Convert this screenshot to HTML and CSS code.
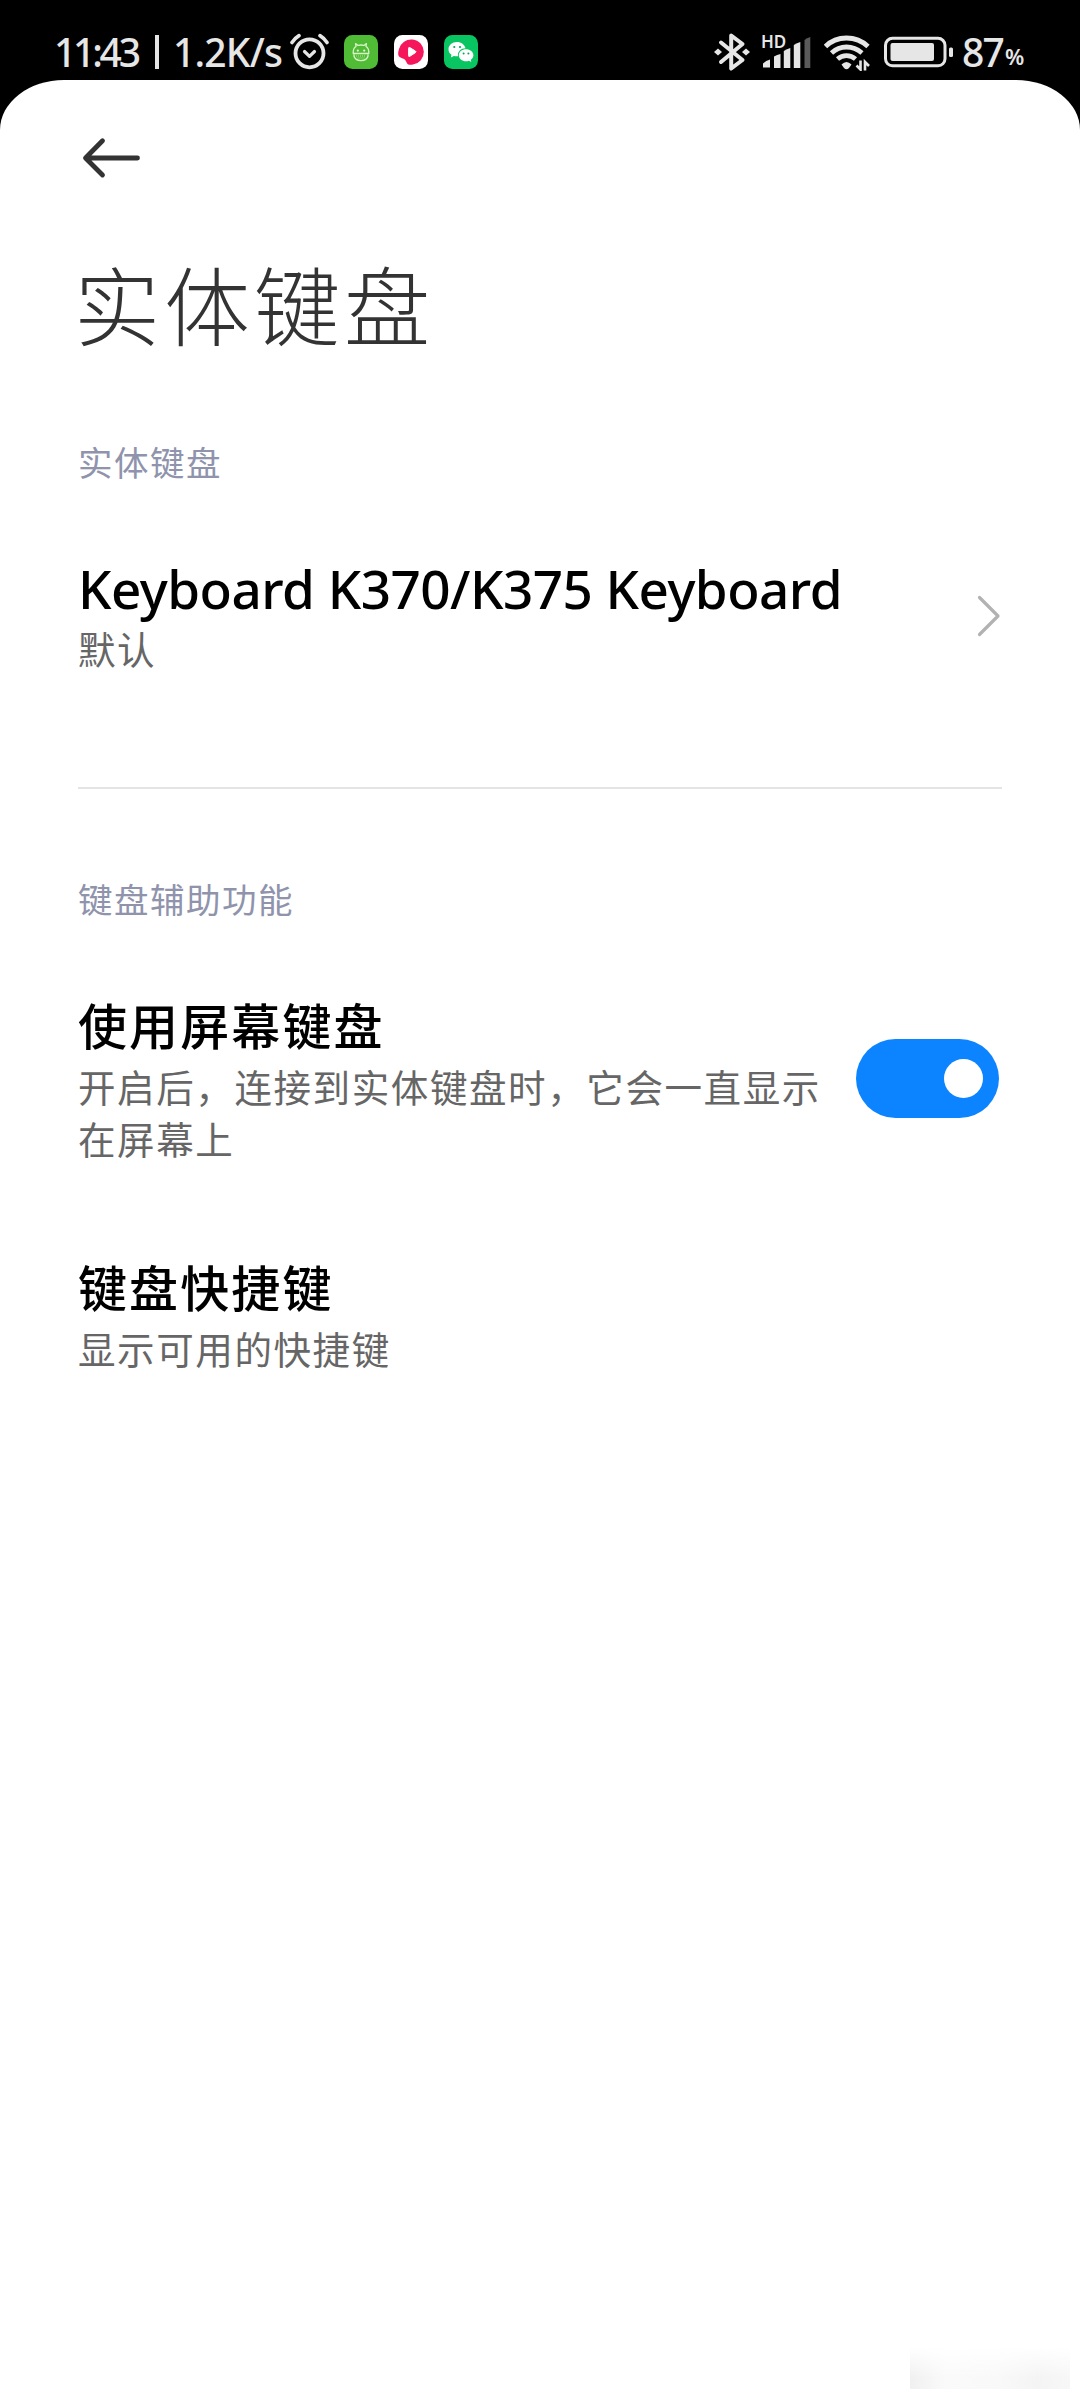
FILE: index.html
```html
<!DOCTYPE html>
<html lang="zh-CN">
<head>
<meta charset="utf-8">
<title>实体键盘</title>
<link rel="stylesheet" href="styles.css">
</head>
<body>
<div class="status">
  <div class="status-left">
    <span class="clock">11:43</span><span class="bar"></span><span class="speed">1.2K/s</span>
    <svg class="alarm" width="40" height="38" viewBox="0 0 40 38" fill="none" stroke="#e6e6e6" stroke-linecap="round">
      <circle cx="19.5" cy="20.3" r="14" stroke-width="3.8"/>
      <path d="M14.5 18.5l5 4.8 5-4.8" stroke-width="3.2" stroke-linejoin="round"/>
      <path d="M2 9.5Q5 5 9 2.6M37 9.5Q34 5 30 2.6" stroke-width="3.6"/>
    </svg>
    <svg class="app" width="34" height="34" viewBox="0 0 34 34">
      <rect width="34" height="34" rx="8.5" fill="#50bb35"/>
      <path d="M9.2 18.5Q9 13 12 11.5L11.6 8.6 14 10.4Q17 9.6 20 10.4L22.4 8.6 22 11.5Q25 13 24.8 18.5ZM10 19.5V21Q11 25.6 17 25.6T24 21V19.5" fill="none" stroke="#d9f3c9" stroke-width="1.3" stroke-linejoin="round"/>
      <path d="M12 21h10M13.5 23h7" stroke="#b6e2a4" stroke-width="1" stroke-dasharray="1 1"/>
      <circle cx="13.8" cy="15.6" r="1.1" fill="#e6f9dc"/><circle cx="20.2" cy="15.6" r="1.1" fill="#e6f9dc"/>
    </svg>
    <svg class="app" width="34" height="34" viewBox="0 0 34 34">
      <rect width="34" height="34" rx="8.5" fill="#fff"/>
      <path d="M5 14A12.6 12.6 0 1 1 19 29.5C16 30 14 29.8 13 28.2 12 26.5 12 25.6 10.5 24.2 8.5 23 4.2 22.5 4.2 19.2Q4.2 16.5 5 14Z" fill="#f5165b"/>
      <path d="M14.6 13.2Q14.6 12 15.8 12.6L21.4 16Q22.6 16.8 21.4 17.7L15.8 21.3Q14.6 22 14.6 20.8Z" fill="#fff" stroke="#fff" stroke-width="1"/>
    </svg>
    <svg class="app" width="34" height="34" viewBox="0 0 34 34">
      <rect width="34" height="34" rx="8.5" fill="#09c561"/>
      <path d="M13 7C8.200 7 4.500 10.200 4.500 14.200 4.500 16.500 5.600 18.500 7.500 19.800L6.800 22.500 9.900 20.900Q12 21.500 14 21.300C13.300 16.800 17 13.300 21.500 13.300 20.600 9.600 17.200 7 13 7Z" fill="#fff"/>
      <path d="M22 14.200C18 14.200 14.800 16.800 14.800 20.200S18 26.200 22 26.200Q23.500 26.200 24.900 25.700L27.300 27 26.700 24.800C28.400 23.700 29.400 22 29.400 20.200 29.400 16.800 26 14.200 22 14.200Z" fill="#fff"/>
      <g fill="#09a553"><circle cx="10.300" cy="12" r="1.100"/><circle cx="16" cy="12" r="1.100"/><circle cx="19.600" cy="18.500" r="1"/><circle cx="24.400" cy="18.500" r="1"/></g>
    </svg>
  </div>
  <div class="status-right">
    <svg width="36" height="40" viewBox="0 0 36 40">
      <path d="M7 10.500L28.500 28 17.200 36.500V3.500L28.500 12 7 30" fill="none" stroke="#e6e6e6" stroke-width="4" stroke-linejoin="round" stroke-linecap="round"/>
      <path d="M0 20l4-3.600 4 3.600-4 3.600zM28 20l4-3.600 4 3.600-4 3.600z" fill="#e6e6e6"/>
    </svg>
    <div class="signal">
      <span class="hd">HD</span>
      <svg width="50" height="36" viewBox="0 0 50 36" fill="#e6e6e6">
        <path d="M2 33.500V29.500Q5 26.500 9 25.500V33.500Z"/><path d="M13 34V22.500Q16 20.800 19.500 20V34Z"/><path d="M22.800 34V17Q26 14.800 29.300 14V34Z"/><path d="M32.800 34V11Q36 9 39.300 8V34Z"/><path d="M43.500 34V6Q46 4 49.300 3V34Z" fill="#5a5a5a"/>
      </svg>
    </div>
    <svg class="wifi" width="46" height="38" viewBox="0 0 46 38">
      <g fill="none" stroke="#e6e6e6" stroke-width="4.800"><path d="M1.500 13.500Q10 5 22.500 5T44 13.500"/><path d="M7.500 20Q14 14 22.500 14T38 20"/><path d="M13.500 26Q17.500 22.600 22.500 22.600T31.500 26"/></g>
      <path d="M17.500 31.500Q22.500 26.500 27.500 31.500L25 35Q22.500 37.500 20 35Z" fill="#e6e6e6"/>
      <path d="M36.500 27.500V36.500L32.500 32.500M41 37.500V29L45 33" fill="none" stroke="#e6e6e6" stroke-width="2.600"/>
    </svg>
    <svg class="battery" width="70" height="32" viewBox="0 0 70 32">
      <rect x="1.500" y="2.300" width="59.500" height="27.500" rx="7" fill="none" stroke="#e6e6e6" stroke-width="3"/>
      <rect x="6.500" y="7" width="43.500" height="18" rx="2" fill="#e6e6e6"/>
      <rect x="65" y="11.500" width="4" height="9.500" rx="1.500" fill="#e6e6e6"/>
    </svg>
    <span class="level">87</span><span class="percent">%</span>
  </div>
</div>
<main class="sheet">
  <div class="back">
    <svg width="64" height="44" viewBox="0 0 64 44" fill="none" stroke="#333" stroke-linecap="round" stroke-linejoin="round"><path d="M24.500 4.700L7.500 22l17 17M8 22H59.500" stroke-width="4.800"/></svg>
  </div>
  <h1 class="title">实体键盘</h1>
  <section class="group first">
    <h2 class="label">实体键盘</h2>
    <div class="row device">
      <div class="text"><div class="name latin">Keyboard K370/K375 Keyboard</div><div class="summary">默认</div></div>
      <svg class="chevron" width="24" height="44" viewBox="0 0 24 44"><path d="M2.500 3.500L21 22 2.500 40.500" fill="none" stroke="#b2b2b2" stroke-width="3.200" stroke-linejoin="round" stroke-linecap="round"/></svg>
    </div>
  </section>
  <section class="group second">
    <h2 class="label">键盘辅助功能</h2>
    <div class="row">
      <div class="text"><div class="name">使用屏幕键盘</div><div class="summary">开启后，连接到实体键盘时，它会一直显示在屏幕上</div></div>
      <div class="toggle"><div class="knob"></div></div>
    </div>
    <div class="row shortcuts">
      <div class="text"><div class="name">键盘快捷键</div><div class="summary">显示可用的快捷键</div></div>
    </div>
  </section>
  <div class="smudge"></div>
</main>
</body>
</html>
```
FILE: styles.css
```css
* { box-sizing: border-box; }
body { margin: 0; background: #000; font-family: "Noto Sans CJK SC", "Noto Sans", sans-serif; }
svg { display: block; flex: none; }
.status { display: flex; justify-content: space-between; height: 80px; padding: 24px 56px 0 54px; color: #e6e6e6; font-family: "Noto Sans", sans-serif; font-weight: 500; }
.status-left, .status-right { display: flex; align-items: center; height: 56px; }
.clock, .speed { font-size: 39px; line-height: 56px; white-space: nowrap; }
.clock { width: 101px; letter-spacing: -3.200px; }
.bar { width: 4px; height: 34px; margin-right: 14px; background: #e6e6e6; }
.speed { width: 117px; letter-spacing: -0.800px; }
.alarm { margin-right: 14px; }
.app { margin-right: 16px; }
.signal { position: relative; margin-left: 11px; }
.hd { position: absolute; left: 0; top: -1px; font-size: 17px; line-height: 17px; font-weight: 600; }
.wifi { margin-left: 13px; }
.battery { margin-left: 14px; }
.level { width: 43px; margin-left: 8px; font-size: 39px; line-height: 56px; letter-spacing: -1.800px; }
.percent { width: 19px; font-size: 22px; line-height: 22px; margin-top: 8px; font-weight: 600; }
.sheet { position: relative; height: 2320px; padding: 0 78px; background: #fff; border-radius: 64px 64px 0 0 / 50px 50px 0 0; }
.back { height: 173px; padding-top: 56px; }
.title { margin: 0 0 0 -4px; height: 100px; font-size: 86px; line-height: 100px; font-weight: 300; letter-spacing: 4px; color: #333; }
.group { padding-top: 84px; }
.label { margin: 0; height: 48px; font-size: 34.500px; line-height: 48px; font-weight: 400; letter-spacing: 1.500px; color: #8f94ac; }
.row { display: flex; align-items: center; justify-content: space-between; margin-top: 72px; }
.name { height: 60px; font-size: 49px; line-height: 60px; font-weight: 500; letter-spacing: 2.100px; color: #000; white-space: nowrap; }
.latin { font-family: "Noto Sans", sans-serif; font-size: 53px; letter-spacing: -0.520px; }
.summary { margin-top: 6px; font-size: 37.500px; line-height: 51.500px; letter-spacing: 1.600px; color: #666; }
.text { width: 752px; }
.first { height: 436px; border-bottom: 2px solid #e4e4e4; }
.second { padding-top: 85px; }
.device { margin-top: 74px; }
.device .summary { margin-top: 3px; }
.chevron { margin-right: 1px; }
.shortcuts { margin-top: 93px; }
.toggle { width: 143px; height: 79px; margin-right: 3px; padding: 20px 16px; border-radius: 40px; background: #0d84ff; display: flex; justify-content: flex-end; }
.knob { width: 39px; height: 39px; border-radius: 50%; background: #fff; }
.smudge { position: absolute; right: 10px; bottom: 11px; width: 160px; height: 42px; background: linear-gradient(#fff, transparent 75%), linear-gradient(90deg, #f0f0f0, #fafafa 22%, #f9f9f9 55%, #f4f4f4 80%, #f7f7f7); }
```
